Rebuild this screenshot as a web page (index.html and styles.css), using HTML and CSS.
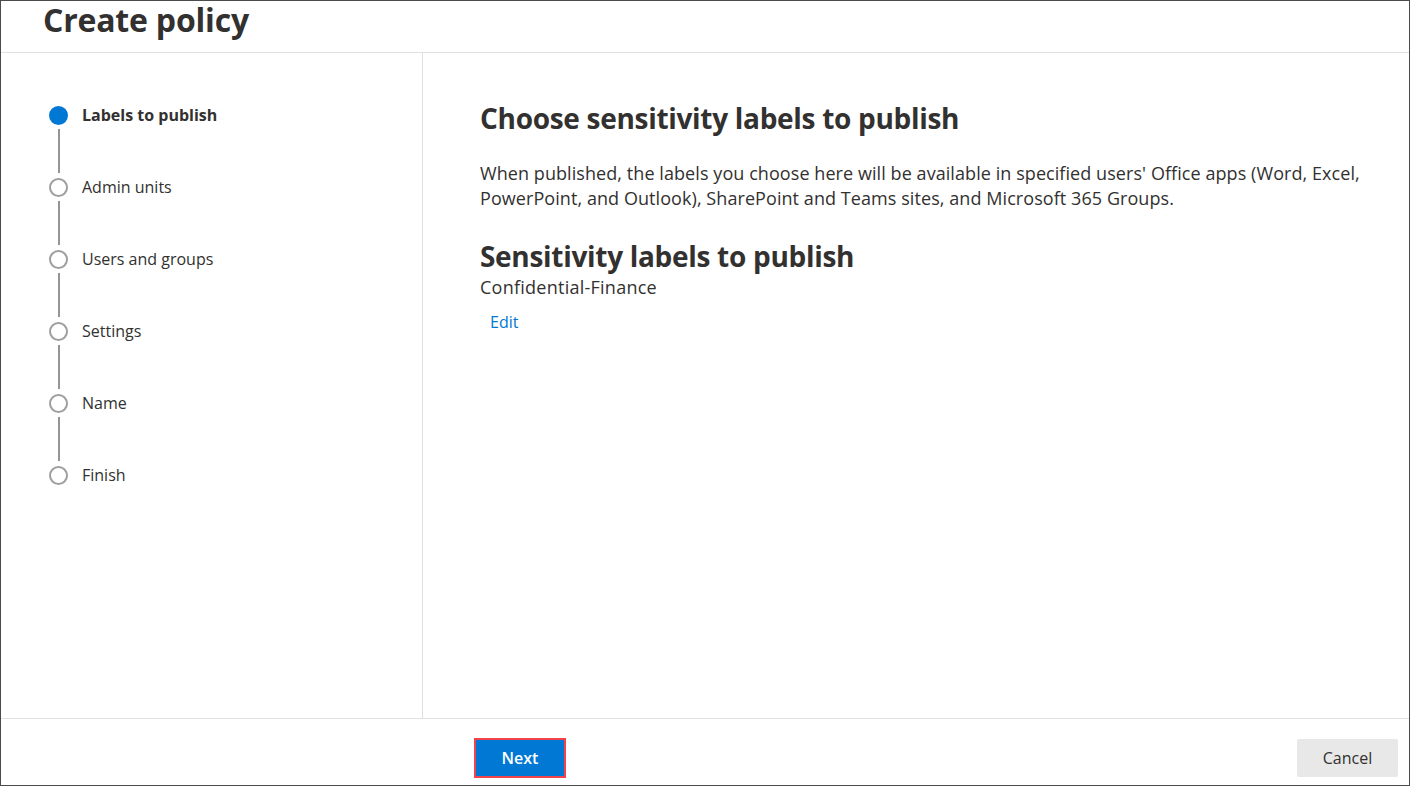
FILE: index.html
```html
<!DOCTYPE html>
<html lang="en">
<head>
<meta charset="utf-8">
<title>Create policy</title>
<link rel="stylesheet" href="styles.css">
</head>
<body>
<div class="frame">
  <header class="header">
    <h1 class="title">Create policy</h1>
  </header>
  <div class="body">
    <nav class="nav">
      <ol class="steps">
        <li class="step active">
          <div class="marker"><span class="dot"></span><span class="line"></span></div>
          <span class="label">Labels to publish</span>
        </li>
        <li class="step">
          <div class="marker"><span class="dot"></span><span class="line"></span></div>
          <span class="label">Admin units</span>
        </li>
        <li class="step">
          <div class="marker"><span class="dot"></span><span class="line"></span></div>
          <span class="label">Users and groups</span>
        </li>
        <li class="step">
          <div class="marker"><span class="dot"></span><span class="line"></span></div>
          <span class="label">Settings</span>
        </li>
        <li class="step">
          <div class="marker"><span class="dot"></span><span class="line"></span></div>
          <span class="label">Name</span>
        </li>
        <li class="step last">
          <div class="marker"><span class="dot"></span></div>
          <span class="label">Finish</span>
        </li>
      </ol>
    </nav>
    <main class="main">
      <h2 class="heading">Choose sensitivity labels to publish</h2>
      <p class="desc">When published, the labels you choose here will be available in specified users' Office apps (Word, Excel, PowerPoint, and Outlook), SharePoint and Teams sites, and Microsoft 365 Groups.</p>
      <h3 class="subheading">Sensitivity labels to publish</h3>
      <div class="value">Confidential-Finance</div>
      <a class="link" href="#">Edit</a>
    </main>
  </div>
  <footer class="footer">
    <button class="btn primary">Next</button>
    <button class="btn secondary">Cancel</button>
  </footer>
</div>
</body>
</html>
```

FILE: styles.css
```css
* { box-sizing: border-box; }
html, body { margin: 0; padding: 0; background: #fff; }
body {
  font-family: "Open Sans", "Noto Sans", sans-serif;
  color: #323130;
}
.frame {
  width: 1410px;
  height: 786px;
  border: 1px solid #4b4b4b;
  display: flex;
  flex-direction: column;
}
.header {
  height: 52px;
  flex: none;
  border-bottom: 1px solid #e1e1e1;
  padding-left: 42px;
}
.title {
  margin: 0;
  font-size: 32px;
  font-weight: 700;
  line-height: 38px;
  letter-spacing: -0.2px;
}
.body {
  flex: 1;
  display: flex;
  min-height: 0;
}
.nav {
  width: 422px;
  flex: none;
  border-right: 1px solid #e1dfdd;
  padding: 53px 0 0 48px;
}
.steps {
  list-style: none;
  margin: 0;
  padding: 0;
}
.step {
  display: flex;
  align-items: flex-start;
  height: 72px;
}
.step.last { height: 20px; }
.marker {
  width: 19px;
  display: flex;
  flex-direction: column;
  align-items: center;
  flex: none;
}
.dot {
  width: 19px;
  height: 19px;
  border-radius: 50%;
  border: 2px solid #a19f9d;
  background: #fff;
}
.active .dot {
  background: #0078d4;
  border-color: #0078d4;
}
.line {
  width: 2px;
  height: 44px;
  margin-top: 4px;
  background: #979593;
}
.label {
  margin-left: 14px;
  font-size: 16px;
  line-height: 19px;
  color: #323130;
}
.active .label { font-weight: 700; }
.main {
  flex: 1;
  padding: 46px 30px 0 57px;
}
.heading {
  margin: 0;
  font-size: 28px;
  font-weight: 700;
  line-height: 38px;
  letter-spacing: -0.3px;
}
.desc {
  margin: 24px 0 0;
  font-size: 18px;
  line-height: 25px;
  letter-spacing: 0.07px;
}
.subheading {
  margin: 28px 0 0;
  font-size: 28px;
  font-weight: 700;
  line-height: 34px;
  letter-spacing: -0.3px;
}
.value {
  font-size: 18px;
  line-height: 28px;
  letter-spacing: 0.25px;
}
.link {
  display: inline-block;
  margin: 10px 0 0 10px;
  font-size: 16px;
  line-height: 22px;
  color: #0078d4;
  text-decoration: none;
}
.footer {
  height: 67px;
  flex: none;
  border-top: 1px solid #e1e1e1;
  display: flex;
  align-items: center;
  justify-content: space-between;
  padding: 12px 11px 0 473px;
}
.btn {
  font-family: "Open Sans", "Noto Sans", sans-serif;
  font-size: 16px;
  font-weight: 600;
  border-radius: 2px;
  cursor: pointer;
}
.primary {
  width: 92px;
  height: 40px;
  background: #0078d4;
  color: #fff;
  border: 2px solid #f0444a;
  border-radius: 0;
}
.secondary {
  width: 101px;
  height: 38px;
  background: #e8e8e8;
  color: #323130;
  border: none;
  font-weight: 500;
}
```
